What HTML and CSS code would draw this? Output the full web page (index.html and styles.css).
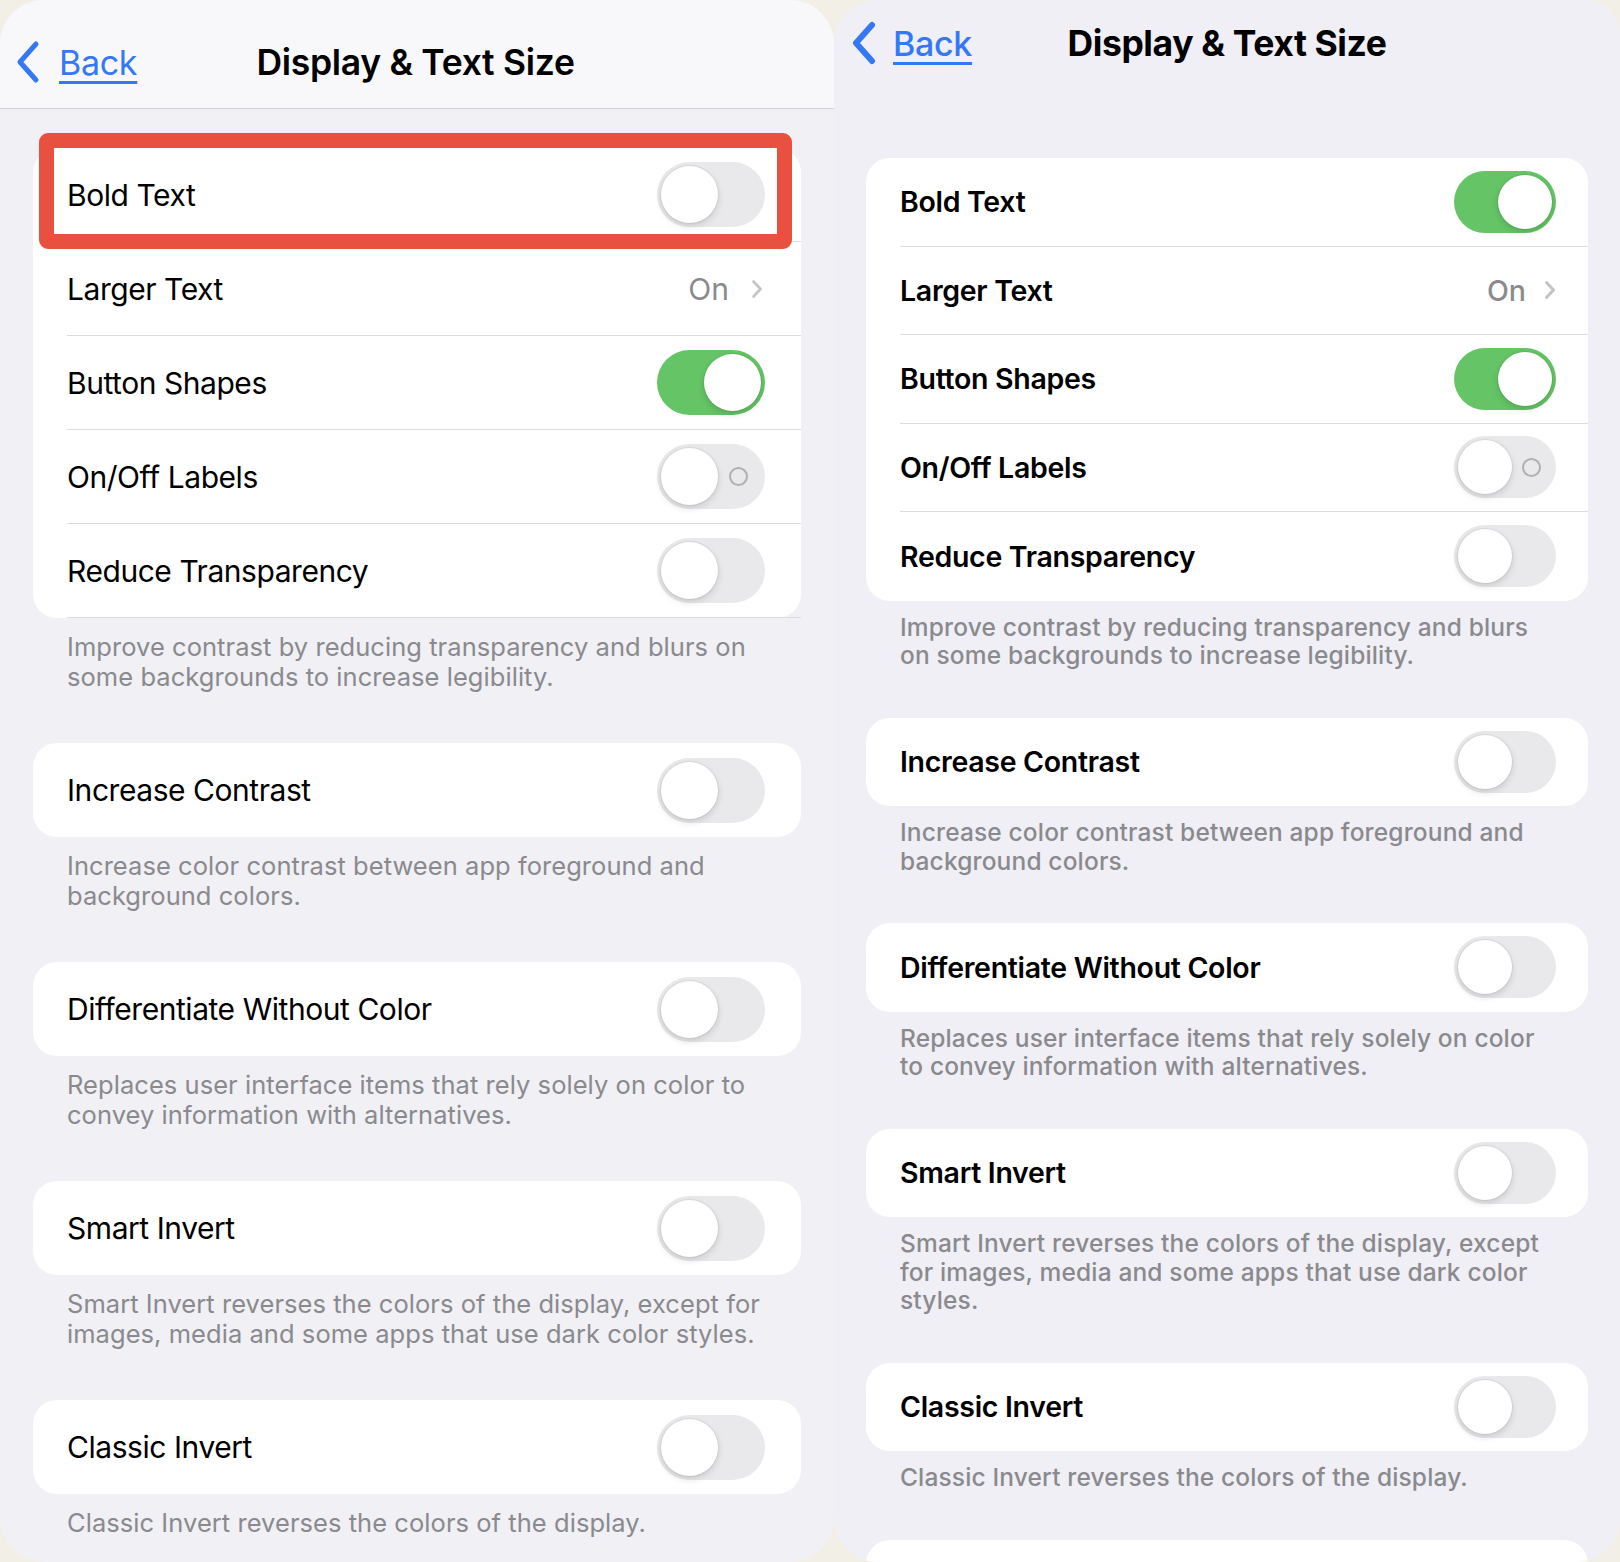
FILE: index.html
```html
<!DOCTYPE html>
<html lang="en">
<head>
<meta charset="utf-8">
<title>Display &amp; Text Size</title>
<link rel="stylesheet" href="styles.css">
</head>
<body>
<div class="stage">
  <!-- LEFT SCREEN -->
  <section class="screen screen-left">
    <header class="nav nav-left">
      <a class="back" href="#">
        <svg class="back-chev" viewBox="0 0 26 44" width="26" height="44"><path d="M21 4 L5 22 L21 40" fill="none" stroke="#3478f6" stroke-width="5" stroke-linecap="round" stroke-linejoin="round"/></svg>
        <span class="back-text">Back</span>
      </a>
      <h1 class="title">Display &amp; Text Size</h1>
      <span></span>
    </header>
    <div class="content">
      <div class="card card-hl">
        <div class="row"><span class="label">Bold Text</span><span class="toggle"><span class="knob"></span></span></div>
        <div class="row"><span class="label">Larger Text</span><span class="value">On<svg class="chev" viewBox="0 0 12 20" width="12" height="20"><path d="M2.5 2.5 L9.5 10 L2.5 17.5" fill="none" stroke="#c4c4c7" stroke-width="2.6" stroke-linecap="round" stroke-linejoin="round"/></svg></span></div>
        <div class="row"><span class="label">Button Shapes</span><span class="toggle on"><span class="knob"></span></span></div>
        <div class="row"><span class="label">On/Off Labels</span><span class="toggle labels"><span class="ring"></span><span class="knob"></span></span></div>
        <div class="row"><span class="label">Reduce Transparency</span><span class="toggle"><span class="knob"></span></span></div>
        <div class="highlight"></div>
      </div>
      <p class="foot">Improve contrast by reducing transparency and blurs on<br>some backgrounds to increase legibility.</p>
      <div class="card">
        <div class="row"><span class="label">Increase Contrast</span><span class="toggle"><span class="knob"></span></span></div>
      </div>
      <p class="foot">Increase color contrast between app foreground and<br>background colors.</p>
      <div class="card">
        <div class="row"><span class="label">Differentiate Without Color</span><span class="toggle"><span class="knob"></span></span></div>
      </div>
      <p class="foot">Replaces user interface items that rely solely on color to<br>convey information with alternatives.</p>
      <div class="card">
        <div class="row"><span class="label">Smart Invert</span><span class="toggle"><span class="knob"></span></span></div>
      </div>
      <p class="foot">Smart Invert reverses the colors of the display, except for<br>images, media and some apps that use dark color styles.</p>
      <div class="card">
        <div class="row"><span class="label">Classic Invert</span><span class="toggle"><span class="knob"></span></span></div>
      </div>
      <p class="foot">Classic Invert reverses the colors of the display.</p>
    </div>
  </section>

  <!-- RIGHT SCREEN -->
  <section class="screen screen-right">
    <header class="nav nav-right">
      <a class="back" href="#">
        <svg class="back-chev" viewBox="0 0 26 44" width="26" height="44"><path d="M21 4 L5 22 L21 40" fill="none" stroke="#3478f6" stroke-width="6" stroke-linecap="round" stroke-linejoin="round"/></svg>
        <span class="back-text">Back</span>
      </a>
      <h1 class="title">Display &amp; Text Size</h1>
      <span></span>
    </header>
    <div class="content">
      <div class="card">
        <div class="row"><span class="label">Bold Text</span><span class="toggle on"><span class="knob"></span></span></div>
        <div class="row"><span class="label">Larger Text</span><span class="value">On<svg class="chev" viewBox="0 0 12 20" width="12" height="20"><path d="M2.5 2.5 L9.5 10 L2.5 17.5" fill="none" stroke="#c4c4c7" stroke-width="3" stroke-linecap="round" stroke-linejoin="round"/></svg></span></div>
        <div class="row"><span class="label">Button Shapes</span><span class="toggle on"><span class="knob"></span></span></div>
        <div class="row"><span class="label">On/Off Labels</span><span class="toggle labels"><span class="ring"></span><span class="knob"></span></span></div>
        <div class="row"><span class="label">Reduce Transparency</span><span class="toggle"><span class="knob"></span></span></div>
      </div>
      <p class="foot">Improve contrast by reducing transparency and blurs<br>on some backgrounds to increase legibility.</p>
      <div class="card">
        <div class="row"><span class="label">Increase Contrast</span><span class="toggle"><span class="knob"></span></span></div>
      </div>
      <p class="foot">Increase color contrast between app foreground and<br>background colors.</p>
      <div class="card">
        <div class="row"><span class="label">Differentiate Without Color</span><span class="toggle"><span class="knob"></span></span></div>
      </div>
      <p class="foot">Replaces user interface items that rely solely on color<br>to convey information with alternatives.</p>
      <div class="card">
        <div class="row"><span class="label">Smart Invert</span><span class="toggle"><span class="knob"></span></span></div>
      </div>
      <p class="foot">Smart Invert reverses the colors of the display, except<br>for images, media and some apps that use dark color<br>styles.</p>
      <div class="card">
        <div class="row"><span class="label">Classic Invert</span><span class="toggle"><span class="knob"></span></span></div>
      </div>
      <p class="foot">Classic Invert reverses the colors of the display.</p>
      <div class="card">
        <div class="row"><span class="label">&nbsp;</span></div>
      </div>
    </div>
  </section>
</div>
</body>
</html>
```

FILE: styles.css
```css
* { box-sizing: border-box; }

html, body {
  margin: 0;
  padding: 0;
}

body {
  background: #f2f0e6;
  font-family: Inter, "Liberation Sans", Arial, sans-serif;
  color: #000;
}

.stage {
  display: flex;
  width: 1620px;
  height: 1562px;
  overflow: hidden;
}

.screen {
  position: relative;
  height: 1562px;
  overflow: hidden;
  border-radius: 44px;
}

.screen-left {
  width: 834px;
  flex: none;
  background: #f0f0f5;
}

.screen-right {
  flex: 1;
  background: #f0eff5;
  border-radius: 44px 34px 44px 44px;
}

/* ---------- nav bar ---------- */
.nav {
  display: grid;
  grid-template-columns: 1fr auto 1fr;
  align-items: center;
}

.nav-left {
  height: 109px;
  background: #f8f8fa;
  border-bottom: 1px solid #cfcfd3;
  padding-top: 16px;
}

.nav-right {
  height: 86px;
}

.back {
  display: flex;
  align-items: center;
  gap: 18px;
  color: #3478f6;
  text-decoration: none;
  justify-self: start;
}

.nav-left .back { margin-left: 15px; }
.nav-right .back { margin-left: 17px; gap: 16px; }

.back-text {
  font-size: 34px;
  text-decoration: underline;
  text-decoration-thickness: 3px;
  text-underline-offset: 6px;
  letter-spacing: -0.3px;
}

.nav-right .back-text { font-weight: 500; }

.title {
  margin: 0;
  font-weight: 600;
  white-space: nowrap;
}

.nav-left .title {
  font-size: 35.5px;
  letter-spacing: -0.3px;
  margin-left: -3px;
}
.nav-right .title {
  font-size: 35.5px;
  font-weight: 700;
  letter-spacing: -0.4px;
}

/* ---------- content ---------- */
.screen-left .content { padding: 39px 33px 0 33px; }
.screen-right .content { padding: 72px 32px 0 32px; }

.card {
  position: relative;
  background: #fff;
  border-radius: 24px;
  padding-left: 34px;
}

.row {
  display: flex;
  align-items: center;
  justify-content: space-between;
  border-bottom: 1px solid #dcdce0;
}
.row:last-of-type { border-bottom: none; }

.screen-left .row {
  height: 94px;
  padding-right: 36px;
}
.screen-right .row {
  height: 88.5px;
  padding-right: 32px;
}

.label {
  white-space: nowrap;
}
.screen-left .label {
  font-size: 30px;
  font-weight: 400;
  letter-spacing: -0.45px;
}
.screen-right .label {
  font-size: 28.5px;
  font-weight: 600;
  letter-spacing: -0.3px;
}

.value {
  display: flex;
  align-items: center;
  color: #8a8a8e;
}
.screen-left .value { font-size: 30px; gap: 22px; margin-right: 2px; }
.screen-right .value { font-size: 28.5px; gap: 18px; font-weight: 500; }

/* ---------- toggles ---------- */
.toggle {
  position: relative;
  display: block;
  flex: none;
  background: #e9e9eb;
}
.screen-left .toggle { width: 108px; height: 65px; border-radius: 33px; }
.screen-right .toggle { width: 102px; height: 62px; border-radius: 31px; }

.toggle.on { background: #65c466; }

.knob {
  position: absolute;
  top: 4px;
  left: 4px;
  border-radius: 50%;
  background: #fff;
  box-shadow: 0 3px 7px rgba(0, 0, 0, 0.14), 0 0 0 1px rgba(0, 0, 0, 0.05);
}
.screen-left .knob { width: 57px; height: 57px; }
.screen-right .knob { width: 54px; height: 54px; }

.screen-left .toggle.on .knob { left: 47px; }
.screen-right .toggle.on .knob { left: 44px; }

.ring {
  position: absolute;
  top: 50%;
  width: 19px;
  height: 19px;
  margin-top: -9.5px;
  border: 2px solid #b0b0b3;
  border-radius: 50%;
}
.screen-left .ring { left: 72px; }
.screen-right .ring { left: 68px; }

/* ---------- footers ---------- */
.foot {
  margin: 0;
  color: #8a8a8e;
  white-space: nowrap;
}
.screen-left .foot {
  padding: 14px 34px 51px 34px;
  font-size: 25.5px;
  line-height: 30px;
  letter-spacing: 0.05px;
}
.screen-right .foot {
  padding: 12px 34px 48px 34px;
  font-size: 24.5px;
  line-height: 28.5px;
  font-weight: 500;
  letter-spacing: 0.15px;
}

/* ---------- annotation ---------- */
.highlight {
  position: absolute;
  top: -15px;
  left: 6px;
  right: 9px;
  height: 116px;
  border: 15px solid #e8503f;
  border-radius: 9px;
  pointer-events: none;
}
```
